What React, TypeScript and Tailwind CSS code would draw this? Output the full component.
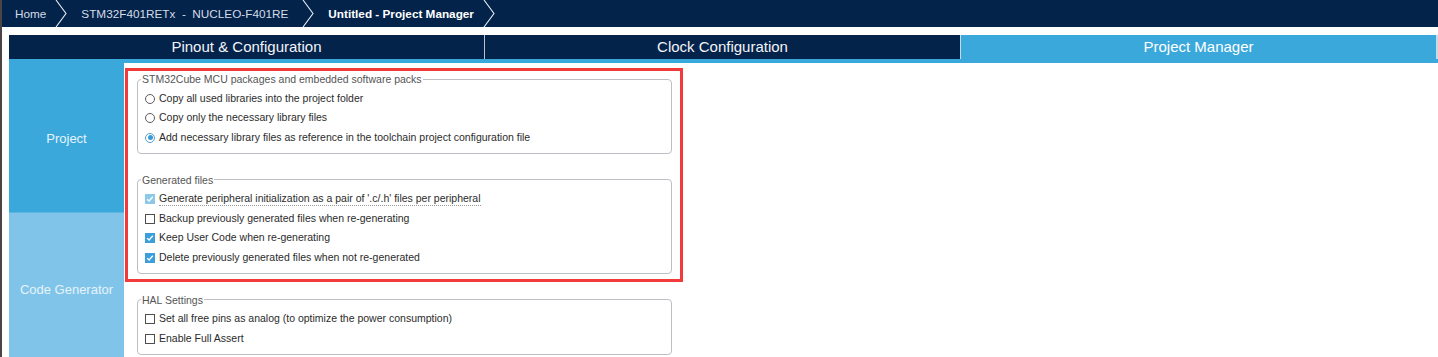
import type { ReactNode } from "react";

function Chevron() {
  return (
    <svg width="12" height="27" viewBox="0 0 12 27" className="block shrink-0">
      <polyline points="1,0 11,13.5 1,27" fill="none" stroke="#e8edf3" strokeWidth="1.1" />
    </svg>
  );
}

function Radio({ checked }: { checked?: boolean }) {
  return (
    <span
      className={`flex h-[10px] w-[10px] shrink-0 items-center justify-center rounded-full border bg-white ${
        checked ? "border-[#5a9fd0]" : "border-[#5c5c5c]"
      }`}
    >
      {checked && <span className="h-[5px] w-[5px] rounded-full bg-[#3a9ad9]" />}
    </span>
  );
}

function Check({ checked, disabled }: { checked?: boolean; disabled?: boolean }) {
  if (!checked) {
    return <span className="block h-[10px] w-[10px] shrink-0 border border-[#4e4e4e] bg-white" />;
  }
  return (
    <span
      className={`flex h-[10px] w-[10px] shrink-0 items-center justify-center ${
        disabled ? "bg-[#8cc8e8]" : "bg-[#3c9fdb]"
      }`}
    >
      <svg width="8" height="8" viewBox="0 0 8 8">
        <polyline points="1.2,4.2 3.1,6 6.8,1.8" fill="none" stroke="white" strokeWidth="1.3" />
      </svg>
    </span>
  );
}

function Row({ icon, children }: { icon: ReactNode; children: ReactNode }) {
  return (
    <div className="flex h-[19.5px] items-center gap-[4px] pl-[7px] text-[10.5px] text-[#2b2b2b]">
      {icon}
      {children}
    </div>
  );
}

function Group({ title, children, className = "" }: { title: string; children: ReactNode; className?: string }) {
  return (
    <fieldset className={`rounded-[4px] border border-[#bcc0c5] pt-[3px] pb-[5px] ${className}`}>
      <legend className="ml-[3px] px-px text-[10.5px] leading-[14px] text-[#555555]">{title}</legend>
      {children}
    </fieldset>
  );
}

export default function App() {
  return (
    <div className="min-h-screen border-l-2 border-[#4a4444] bg-white font-['Liberation_Sans',Arial,sans-serif]">
      {/* breadcrumb */}
      <div className="flex h-[27px] items-center bg-[#03234b] pl-[13px] text-[11.75px]">
        <span className="text-[#d5dce5]">Home</span>
        <span className="ml-[9px]">
          <Chevron />
        </span>
        <span className="ml-[14px] whitespace-pre text-[#d5dce5]">STM32F401RETx  -  NUCLEO-F401RE</span>
        <span className="ml-[14px]">
          <Chevron />
        </span>
        <span className="ml-[14px] font-bold text-white">Untitled - Project Manager</span>
        <span className="ml-[9px]">
          <Chevron />
        </span>
      </div>

      <div className="pl-[7px]">
        {/* tabs */}
        <div className="mt-[8px] flex h-[28px] border-b-4 border-[#3ba8dc] text-[15px]">
          <div className="flex flex-1 items-center justify-center bg-[#03234b] text-[#f2f4f7]">Pinout &amp; Configuration</div>
          <div className="flex flex-1 items-center justify-center border-l border-[#b8c2cc] bg-[#03234b] text-[#f2f4f7]">
            Clock Configuration
          </div>
          <div className="flex flex-1 items-center justify-center border-l border-r-2 border-[#c5dce8] bg-[#3ba8dc] text-white">
            Project Manager
          </div>
        </div>

        <div className="flex">
          {/* sidebar */}
          <div className="w-[115px] shrink-0 text-[13px] text-[#e6f3fa]">
            <div className="flex h-[150px] items-center justify-center border-b border-[#5cb6e2] bg-[#3ba8dc] pt-[3px]">
              Project
            </div>
            <div className="flex h-[154px] items-center justify-center bg-[#80c5e9]">Code Generator</div>
          </div>

          {/* content */}
          <div className="flex-1">
            <div className="ml-px mt-[5px] w-[558px] border-[3px] border-[#f23a3a] pt-px pl-[9px] pr-[8px] pb-[5px]">
              <Group title="STM32Cube MCU packages and embedded software packs">
                <Row icon={<Radio />}>Copy all used libraries into the project folder</Row>
                <Row icon={<Radio />}>Copy only the necessary library files</Row>
                <Row icon={<Radio checked />}>
                  Add necessary library files as reference in the toolchain project configuration file
                </Row>
              </Group>
              <Group title="Generated files" className="mt-[19px]">
                <Row icon={<Check checked disabled />}>
                  <span className="border-b border-dotted border-[#9a9a9a] leading-[13px]">
                    Generate peripheral initialization as a pair of '.c/.h' files per peripheral
                  </span>
                </Row>
                <Row icon={<Check />}>Backup previously generated files when re-generating</Row>
                <Row icon={<Check checked />}>Keep User Code when re-generating</Row>
                <Row icon={<Check checked />}>Delete previously generated files when not re-generated</Row>
              </Group>
            </div>

            <Group title="HAL Settings" className="ml-[13px] mt-[11px] w-[535px]">
              <Row icon={<Check />}>Set all free pins as analog (to optimize the power consumption)</Row>
              <Row icon={<Check />}>Enable Full Assert</Row>
            </Group>
          </div>
        </div>
      </div>
    </div>
  );
}
